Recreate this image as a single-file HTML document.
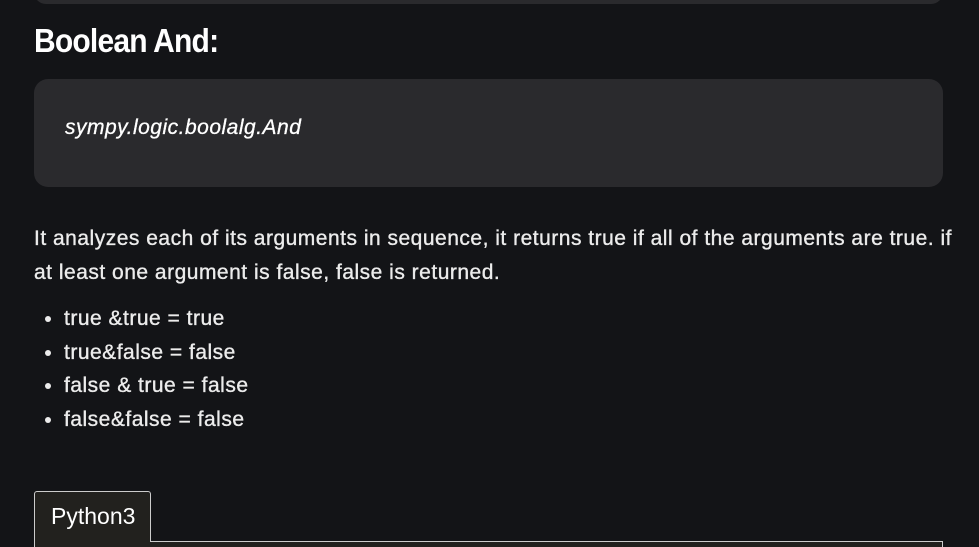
<!DOCTYPE html>
<html><head><meta charset="utf-8"><style>
html,body{margin:0;width:979px;height:547px;overflow:hidden}
body{background:#131417;position:relative;font-family:"Liberation Sans",sans-serif;color:#ececec}
.top{position:absolute;left:34px;top:-20px;width:909px;height:24px;background:#2a2a2d;border-radius:12px}
h2{position:absolute;left:34px;top:23px;margin:0;font-size:30px;font-weight:bold;color:#fff;letter-spacing:-0.8px;line-height:38px;transform:scaleY(1.12);transform-origin:left center}
.code{position:absolute;left:34px;top:79px;width:909px;height:108px;background:#2a2a2d;border-radius:14px}
.code span{position:absolute;left:31px;top:37px;font-style:italic;font-size:21px;color:#fff;letter-spacing:0.5px;-webkit-text-stroke:0.3px #fff}
.p{position:absolute;left:34px;top:222px;font-size:21px;line-height:34px;white-space:nowrap;letter-spacing:0.5px;-webkit-text-stroke:0.35px #ececec}
ul{position:absolute;left:0;top:302px;margin:0;padding:0 0 0 64px;font-size:21px;line-height:33.6px;letter-spacing:0.5px;white-space:nowrap;-webkit-text-stroke:0.35px #ececec}
.tab{position:absolute;z-index:2;left:34px;top:491px;width:117px;height:51px;background:#22211e;border:1px solid #ccc;border-bottom:none;border-radius:3px 3px 0 0;box-sizing:border-box}
.tab span{position:absolute;left:16px;top:11px;font-size:23px;color:#fff}
.panel{position:absolute;left:34px;top:541px;width:909px;height:6px;background:#22211e;border:1px solid #ccc;border-bottom:none;box-sizing:border-box}
</style></head><body>
<div class="top"></div>
<h2>Boolean And:</h2>
<div class="code"><span>sympy.logic.boolalg.And</span></div>
<div class="p">It analyzes each of its arguments in sequence, it returns true if all of the arguments are true. if<br>at least one argument is false, false is returned.</div>
<ul>
<li>true &amp;true = true</li>
<li>true&amp;false = false</li>
<li>false &amp; true = false</li>
<li>false&amp;false = false</li>
</ul>
<div class="panel"></div>
<div class="tab"><span>Python3</span></div>
</body></html>
